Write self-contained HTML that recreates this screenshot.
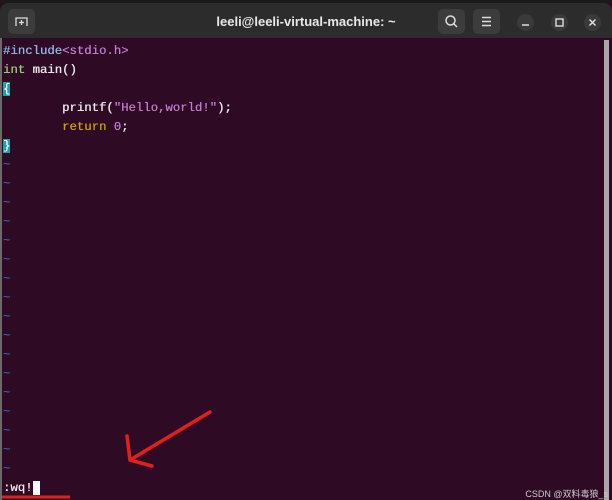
<!DOCTYPE html>
<html><head><meta charset="utf-8"><style>
body{margin:0;width:612px;height:500px;overflow:hidden;background:#2f0a24;position:relative;font-family:"Liberation Sans",sans-serif}
.top{position:absolute;left:0;top:0;width:612px;height:3px;background:#1a1a1a}
.title{position:absolute;left:0;top:3px;width:612px;height:35px;background:#2c2c2c;border-radius:8px 8px 0 0}
.t{position:absolute;left:0;width:612px;top:11px;text-align:center;color:#e8e8e8;font-weight:bold;font-size:13px}
.btn{position:absolute;top:6px;width:27px;height:25px;background:#3c3c3c;border-radius:5px}
.cb{position:absolute;top:11px;width:17px;height:17px;border-radius:50%;background:#3a3a3a}
.term{position:absolute;left:0;top:38px;width:604px;height:462px;background:#2f0a24;border-left:2px solid #6a6a6a;box-sizing:border-box}
pre{margin:0;position:absolute;left:3px;top:42px;font-family:"Liberation Mono",monospace;font-size:12.3px;line-height:19px;color:#e8e8e8;text-shadow:0.3px 0 0 currentColor}
.b{color:#8fb4e0}.m{color:#c27ad0}.g{color:#9ccc7a}.o{color:#c8a000}.h{background:#20a0b0;color:#fff}.tl{color:#3465a4}
.sb{position:absolute;left:604px;top:40px;width:5px;height:460px;background:#a8a8a8}
</style></head><body>
<div class="top"></div>
<div class="title">
<div class="btn" style="left:8px"><svg width="27" height="25"><path d="M8 17V9h11v8" fill="none" stroke="#ddd" stroke-width="1.3"/><path d="M13.5 11v5M11 13.5h5" stroke="#ddd" stroke-width="1.3"/></svg></div>
<div class="t">leeli@leeli-virtual-machine: ~</div>
<div class="btn" style="left:438px"><svg width="27" height="25"><circle cx="12.5" cy="11.5" r="4.5" fill="none" stroke="#ddd" stroke-width="1.5"/><path d="M16 15l3 3" stroke="#ddd" stroke-width="1.5"/></svg></div>
<div class="btn" style="left:473px"><svg width="27" height="25"><path d="M9 8.5h9M9 12.5h9M9 16.5h9" stroke="#ddd" stroke-width="1.5"/></svg></div>
<div class="cb" style="left:517px"><svg width="17" height="17"><path d="M5 11h7" stroke="#ddd" stroke-width="1.5"/></svg></div>
<div class="cb" style="left:551px"><svg width="17" height="17"><rect x="5" y="5" width="7" height="7" fill="none" stroke="#ddd" stroke-width="1.4"/></svg></div>
<div class="cb" style="left:584px"><svg width="17" height="17"><path d="M5.5 5.5l6 6M11.5 5.5l-6 6" stroke="#ddd" stroke-width="1.5"/></svg></div>
</div>
<div class="term"></div>
<pre><span class="b">#include</span><span class="m">&lt;stdio.h&gt;</span>
<span class="g">int</span> main()
<span class="h">{</span>
        printf(<span class="m">"Hello,world!"</span>);
        <span class="o">return</span> <span class="m">0</span>;
<span class="h">}</span>
<span class="tl">~
~
~
~
~
~
~
~
~
~
~
~
~
~
~
~
~</span>
:wq!<span style="background:#fff">&nbsp;</span></pre>
<div class="sb"></div>
<svg style="position:absolute;left:0;top:0" width="612" height="500"><path d="M210 412L130 460M130 460L127 436M130 460L152 466" stroke="#e0201c" stroke-width="3.5" fill="none" stroke-linecap="round"/><path d="M2 497H70" stroke="#e0201c" stroke-width="3"/></svg>
<div style="position:absolute;right:4px;top:487px;color:#ccc;font-size:9px;font-family:'Liberation Sans','Noto Sans CJK SC',sans-serif">CSDN @双料毒狼_s</div>
</body></html>
